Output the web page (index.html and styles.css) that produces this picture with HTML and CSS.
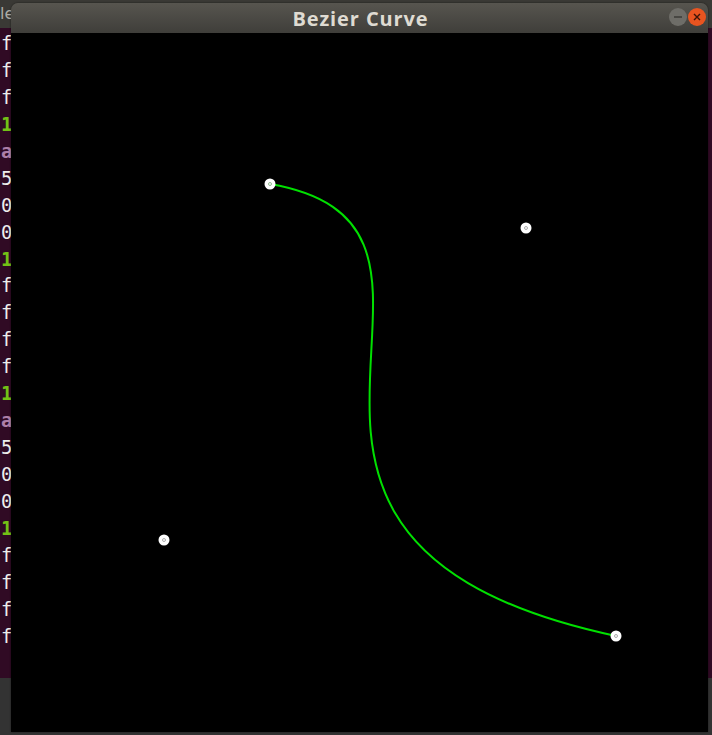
FILE: index.html
```html
<!DOCTYPE html>
<html>
<head>
<meta charset="utf-8">
<link rel="stylesheet" href="styles.css">
</head>
<body>
<div class="desktop">
  <div class="terminal">
    <div class="term-head">le</div>
    <div class="term-body">
      <div class="ln">f</div><div class="ln">f</div><div class="ln">f</div>
      <div class="ln g">1</div><div class="ln p">a</div><div class="ln">5</div>
      <div class="ln">0</div><div class="ln">0</div><div class="ln g">1</div>
      <div class="ln">f</div><div class="ln">f</div><div class="ln">f</div><div class="ln">f</div>
      <div class="ln g">1</div><div class="ln p">a</div><div class="ln">5</div>
      <div class="ln">0</div><div class="ln">0</div><div class="ln g">1</div>
      <div class="ln">f</div><div class="ln">f</div><div class="ln">f</div><div class="ln">f</div>
    </div>
    <div class="term-foot"></div>
  </div>
  <div class="window">
    <div class="titlebar">
      <span class="title">Bezier Curve</span>
      <div class="controls">
        <span class="btn min"><svg width="18" height="18" viewBox="0 0 18 18"><line x1="5" y1="9" x2="13" y2="9" stroke="#3c3b37" stroke-width="1.4"/></svg></span>
        <span class="btn close"><svg width="18" height="18" viewBox="0 0 18 18"><path d="M6 6L12 12M12 6L6 12" stroke="#3a1408" stroke-width="1.4"/></svg></span>
      </div>
    </div>
    <div class="canvas">
      <svg class="plot" width="697" height="699" viewBox="0 0 697 699">
        <path d="M259 151 C515 195 153 507 605 603" fill="none" stroke="#00e000" stroke-width="2"/>
        <circle cx="259" cy="151" r="5.5" fill="#fff"/>
        <circle cx="259" cy="151" r="1.5" fill="none" stroke="#7a7" stroke-width="0.8"/>
        <circle cx="515" cy="195" r="5.5" fill="#fff"/>
        <circle cx="515" cy="195" r="1.5" fill="none" stroke="#999" stroke-width="0.8"/>
        <circle cx="153" cy="507" r="5.5" fill="#fff"/>
        <circle cx="153" cy="507" r="1.5" fill="none" stroke="#999" stroke-width="0.8"/>
        <circle cx="605" cy="603" r="5.5" fill="#fff"/>
        <circle cx="605" cy="603" r="1.5" fill="none" stroke="#999" stroke-width="0.8"/>
      </svg>
    </div>
  </div>
</div>
</body>
</html>
```
FILE: styles.css
```css
html, body {
  margin: 0;
  padding: 0;
  background: #2c2c2c;
}
.desktop {
  position: relative;
  width: 712px;
  height: 735px;
  overflow: hidden;
  background: #2e2e2e;
}
.terminal {
  display: flex;
  flex-direction: column;
  width: 712px;
  height: 735px;
}
.term-head {
  height: 28px;
  background: #3a3935;
  color: #aeaca5;
  font-family: "DejaVu Sans", sans-serif;
  font-size: 16px;
  line-height: 28px;
}
.term-body {
  height: 650px;
  box-sizing: border-box;
  padding-top: 2px;
  background: #300a24;
  font-family: "DejaVu Sans Mono", monospace;
  font-size: 19px;
  color: #eeeeec;
  padding-left: 1px;
}
.ln {
  height: 26.95px;
  line-height: 26.95px;
}
.ln.g {
  color: #73c216;
  font-weight: bold;
}
.ln.p {
  color: #ad7fa8;
  font-weight: bold;
}
.term-foot {
  flex: 1;
  background: #333333;
}
.window {
  position: absolute;
  left: 11px;
  top: 3px;
  width: 697px;
  height: 729px;
  display: flex;
  flex-direction: column;
  border-radius: 7px 7px 0 0;
  overflow: hidden;
  box-shadow: 0 0 2px rgba(0,0,0,0.6);
}
.titlebar {
  height: 30px;
  flex: none;
  background: linear-gradient(#57554f, #3f3e3a);
  display: flex;
  align-items: center;
  justify-content: center;
  position: relative;
}
.title {
  font-family: "Open Sans", sans-serif;
  font-weight: 700;
  font-size: 20px;
  color: #dfdbd2;
  letter-spacing: 0.9px;
  margin-left: 2px;
}
.controls {
  position: absolute;
  right: 2px;
  top: 5px;
  display: flex;
  gap: 1px;
}
.btn {
  width: 18px;
  height: 18px;
  border-radius: 50%;
  display: block;
}
.btn svg { display: block; }
.btn.min {
  background: #6e6d68;
}
.btn.close {
  background: #e95420;
}
.canvas {
  flex: 1;
  background: #000;
}
.plot {
  display: block;
}
```
